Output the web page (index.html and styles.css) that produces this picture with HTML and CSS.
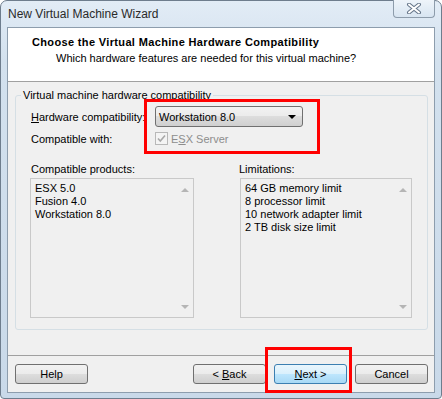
FILE: index.html
```html
<!DOCTYPE html>
<html lang="en">
<head>
  <meta charset="UTF-8" />
  <title>New Virtual Machine Wizard</title>
  <link rel="stylesheet" href="styles.css">
</head>
<body>
  <div class="window">
    <!-- title bar -->
    <div class="titlebar">
      <span class="title">New Virtual Machine Wizard</span>
      <div class="close-btn">
        <svg width="16" height="11" viewBox="0 0 16 11">
          <path d="M3 1.5 L13 9.5 M13 1.5 L3 9.5" stroke="#66768a" stroke-width="4" stroke-linecap="round" fill="none"/>
          <path d="M3 1.5 L13 9.5 M13 1.5 L3 9.5" stroke="#ffffff" stroke-width="2" stroke-linecap="round" fill="none"/>
        </svg>
      </div>
    </div>

    <div class="client">
      <!-- header -->
      <div class="header">
        <div class="header-title">Choose the Virtual Machine Hardware Compatibility</div>
        <div class="header-sub">Which hardware features are needed for this virtual machine?</div>
      </div>

      <!-- body -->
      <div class="body">
        <fieldset class="group">
          <legend>Virtual machine hardware compatibility</legend>
          <div class="hw-grid">
            <span class="lbl"><u>H</u>ardware compatibility:</span>
            <div class="combo">
              <span>Workstation 8.0</span>
              <span class="combo-arrow"></span>
            </div>
            <span class="lbl">Compatible with:</span>
            <div class="check">
              <svg class="check-box" width="13" height="13" viewBox="0 0 13 13">
                <rect x="0.5" y="0.5" width="12" height="12" fill="#f4f4f4" stroke="#b8b8b8"/>
                <path d="M3 6.5 L5.3 9 L10 3.5" stroke="#a8a8a8" stroke-width="1.6" fill="none"/>
              </svg>
              <span class="check-lbl">E<u>S</u>X Server</span>
            </div>
          </div>

          <div class="lists">
            <div class="list-col">
              <span class="lbl">Compatible products:</span>
              <div class="listbox">
                <ul class="items">
                  <li>ESX 5.0</li>
                  <li>Fusion 4.0</li>
                  <li>Workstation 8.0</li>
                </ul>
                <div class="scroll">
                  <span class="arrow-up"></span>
                  <span class="arrow-down"></span>
                </div>
              </div>
            </div>
            <div class="list-col wide">
              <span class="lbl">Limitations:</span>
              <div class="listbox">
                <ul class="items">
                  <li>64 GB memory limit</li>
                  <li>8 processor limit</li>
                  <li>10 network adapter limit</li>
                  <li>2 TB disk size limit</li>
                </ul>
                <div class="scroll">
                  <span class="arrow-up"></span>
                  <span class="arrow-down"></span>
                </div>
              </div>
            </div>
          </div>
        </fieldset>
      </div>

      <!-- buttons -->
      <div class="footer">
        <button class="btn">Help</button>
        <div class="spacer"></div>
        <button class="btn">&lt; <u>B</u>ack</button>
        <button class="btn default"><u>N</u>ext &gt;</button>
        <button class="btn">Cancel</button>
      </div>
    </div>

    <!-- red annotation boxes -->
    <div class="mark mark-combo"></div>
    <div class="mark mark-next"></div>
  </div>
</body>
</html>
```

FILE: styles.css
```css
* {
  box-sizing: border-box;
}

body {
  margin: 0;
  font-family: "Liberation Sans", Arial, sans-serif;
  font-size: 11px;
  color: #000;
  background: #fff;
}

.window {
  position: relative;
  width: 442px;
  height: 399px;
  border: 1px solid #6e7d8d;
  border-radius: 7px 7px 4px 4px;
  padding: 0 6px 5px;
  background: linear-gradient(#e2ecf6, #d3e1ee 60px, #c9d9e9);
}

.titlebar {
  display: flex;
  align-items: flex-start;
  height: 26px;
}

.title {
  margin: 6px 0 0 1px;
  font-size: 12px;
  color: #2a2a2a;
}

.close-btn {
  margin-left: auto;
  margin-top: -1px;
  width: 42px;
  height: 18px;
  display: flex;
  align-items: center;
  justify-content: center;
  border: 1px solid #8d9cab;
  border-top: none;
  border-radius: 0 0 4px 4px;
  background: linear-gradient(#eef4fa, #d8e5f1);
}

.client {
  height: 366px;
  border: 1px solid #8d9dad;
  background: #f0f0f0;
  display: flex;
  flex-direction: column;
}

.header {
  height: 54px;
  background: #fff;
  border-bottom: 1px solid #a0a0a0;
  padding-top: 7px;
}

.header-title {
  font-weight: bold;
  padding-left: 24px;
  line-height: 14px;
  letter-spacing: 0.35px;
}

.header-sub {
  padding-left: 48px;
  margin-top: 2px;
  line-height: 14px;
}

.body {
  padding: 7px 6px 0 7px;
}

.group {
  margin: 0;
  border: 1px solid #d5dfe5;
  border-radius: 3px;
  padding: 4px 15px 11px 15px;
}

.group legend {
  padding: 0 2px;
  margin-left: -10px;
  line-height: 13px;
}

.hw-grid {
  display: grid;
  grid-template-columns: 124px 148px;
  grid-template-rows: 21px 17px;
  row-gap: 3px;
  align-items: center;
}

.combo {
  height: 21px;
  display: flex;
  align-items: center;
  justify-content: space-between;
  padding: 0 6px 0 3px;
  border: 1px solid #707070;
  border-radius: 3px;
  background: linear-gradient(#f2f2f2, #ebebeb 50%, #dddddd 50%, #cfcfcf);
}

.combo-arrow {
  width: 0;
  height: 0;
  border-left: 4px solid transparent;
  border-right: 4px solid transparent;
  border-top: 4px solid #000;
}

.check {
  display: flex;
  align-items: center;
  gap: 3px;
}

.check-lbl {
  color: #8d8d8d;
}

.lists {
  display: grid;
  grid-template-columns: 164px 172px;
  column-gap: 46px;
  margin-top: 16px;
  margin-left: -1px;
}

.list-col {
  display: flex;
  flex-direction: column;
}

.list-col .lbl {
  padding-left: 1px;
  line-height: 13px;
  margin-bottom: 2px;
}

.list-col.wide .lbl {
  margin-left: -2px;
}

.listbox {
  height: 140px;
  display: flex;
  border: 1px solid #c9c9c9;
  background: #f0f0f0;
}

.items {
  flex: 1;
  list-style: none;
  margin: 0;
  padding: 3px 4px;
  line-height: 13px;
}

.scroll {
  width: 17px;
  display: flex;
  flex-direction: column;
  justify-content: space-between;
  align-items: center;
  padding: 9px 0 8px;
}

.arrow-up, .arrow-down {
  width: 0;
  height: 0;
  border-left: 4px solid transparent;
  border-right: 4px solid transparent;
}

.arrow-up {
  border-bottom: 4px solid #b5b5b5;
}

.arrow-down {
  border-top: 4px solid #b5b5b5;
}

.footer {
  margin-top: auto;
  height: 37px;
  border-top: 1px solid #a0a0a0;
  display: flex;
  gap: 8px;
  padding: 8px 6px 0 7px;
}

.spacer {
  flex: 1;
}

.btn {
  width: 73px;
  height: 20px;
  padding: 0;
  font-family: "Liberation Sans", Arial, sans-serif;
  font-size: 11px;
  color: #000;
  border: 1px solid #707070;
  border-radius: 3px;
  background: linear-gradient(#f2f2f2, #ebebeb 50%, #dddddd 50%, #cfcfcf);
}

.btn.default {
  border-color: #3c7fb1;
  background: linear-gradient(#eaf6fd, #d9f0fc 50%, #bee6fd 50%, #a7d9f5);
}

.mark {
  position: absolute;
  border: 3px solid #ff0000;
}

.mark-combo {
  left: 143px;
  top: 98px;
  width: 176px;
  height: 55px;
}

.mark-next {
  left: 264px;
  top: 346px;
  width: 87px;
  height: 46px;
}
```
